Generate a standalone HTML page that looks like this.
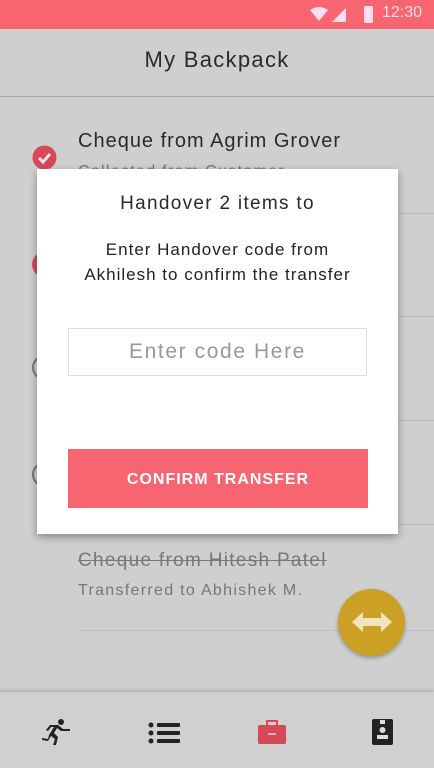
<!DOCTYPE html>
<html><head><style>
*{margin:0;padding:0;box-sizing:border-box}
body{width:434px;height:768px;overflow:hidden;background:#cfcfcf;font-family:"Liberation Sans",sans-serif;position:relative}
.abs{position:absolute}
.sb{left:0;top:0;width:434px;height:29px;background:#f76571}
.hdr{left:0;top:29px;width:434px;height:68px;border-bottom:1px solid #a8a8a8;text-align:center;line-height:62px;font-size:22px;letter-spacing:1.3px;color:#2a2a2a}
.div{left:78px;right:0;height:1px;background:#bdbdbd}
.t{left:78px;font-size:20px;letter-spacing:1px;color:#2a2a2a}
.s{left:78px;font-size:16px;letter-spacing:1.3px;color:#777}
.dlg{left:37px;top:169px;width:361px;height:365px;background:#fff;box-shadow:0 3px 8px rgba(0,0,0,.35)}
.nav{left:0;top:692px;width:434px;height:76px;background:#d0d0d0;box-shadow:0 -2px 3px rgba(0,0,0,.15)}
</style></head><body>
<div class="abs sb"></div>
<svg class="abs" style="left:308px;top:6px" width="48" height="18" viewBox="0 0 48 18"><path d="M2 4 Q11 -2 20 4 L11 15Z" fill="#fde"/><path d="M24 16 L38 2 L38 16Z" fill="#fde"/></svg>
<div class="abs" style="left:364px;top:6px;width:9px;height:17px;background:#fde;border-radius:1px"></div>
<div class="abs" style="left:382px;top:4px;color:#fde;font-size:16px">12:30</div>
<div class="abs hdr">My Backpack</div>
<div class="abs t" style="top:130px">Cheque from Agrim Grover</div>
<div class="abs s" style="top:163px">Collected from Customer</div>
<svg class="abs" style="left:32px;top:145px" width="25" height="25"><circle cx="12.5" cy="12.5" r="12" fill="#d64a58"/><path d="M7 13 L11 17 L18 9" stroke="#fde" stroke-width="3" fill="none"/></svg>
<div class="abs" style="left:32px;top:252px;width:25px;height:25px;border-radius:50%;background:#d64a58"></div>
<div class="abs" style="left:32px;top:355px;width:25px;height:25px;border-radius:50%;border:2px solid #777"></div>
<div class="abs" style="left:32px;top:462px;width:25px;height:25px;border-radius:50%;border:2px solid #777"></div>
<div class="abs div" style="top:213px"></div>
<div class="abs div" style="top:316px"></div>
<div class="abs div" style="top:420px"></div>
<div class="abs div" style="top:524px"></div>
<div class="abs t" style="top:550px;font-size:19px;letter-spacing:1.3px;color:#777;text-decoration:line-through">Cheque from Hitesh Patel</div>
<div class="abs s" style="top:582px">Transferred to Abhishek M.</div>
<div class="abs div" style="top:630px"></div>
<div class="abs" style="left:338px;top:589px;width:67px;height:67px;border-radius:50%;background:#cc9f25;box-shadow:0 2px 4px rgba(0,0,0,.3)"></div>
<svg class="abs" style="left:351px;top:609px" width="42" height="26"><path d="M1 13 L12 3 L12 9 L30 9 L30 3 L41 13 L30 23 L30 17 L12 17 L12 23Z" fill="#efe3c0"/></svg>
<div class="abs dlg">
<div class="abs" style="left:0;width:361px;top:24px;text-align:center;font-size:19px;letter-spacing:1.3px;color:#2a2a2a">Handover 2 items to</div>
<div class="abs" style="left:0;width:361px;top:68px;text-align:center;font-size:17px;letter-spacing:1px;line-height:25px;color:#222">Enter Handover code from<br>Akhilesh to confirm the transfer</div>
<div class="abs" style="left:31px;top:159px;width:299px;height:48px;border:1px solid #ddd;text-align:center;line-height:46px;font-size:21px;letter-spacing:1.6px;color:#999">Enter code Here</div>
<div class="abs" style="left:31px;top:280px;width:300px;height:59px;background:#f76571;color:#fff;text-align:center;line-height:61px;font-size:16px;letter-spacing:1px;font-weight:bold">CONFIRM TRANSFER</div>
</div>
<div class="abs nav"></div>
<svg class="abs" style="left:40px;top:718px" width="32" height="28" viewBox="0 0 32 28"><circle cx="21" cy="4" r="3" fill="#222"/><path d="M2 22 L8 23 L11 18 L15 21 L13 27 L16 27 L18 19 L14 15 L17 10 L21 13 L30 13 L30 11 L23 11 L18 7 L10 7 L6 12 L8 13 L11 9 L14 9 L9 17 L8 21 L2 20Z" fill="#222"/></svg>
<svg class="abs" style="left:148px;top:722px" width="33" height="22"><circle cx="3" cy="3" r="2.5" fill="#222"/><circle cx="3" cy="11" r="2.5" fill="#222"/><circle cx="3" cy="19" r="2.5" fill="#222"/><rect x="9" y="1" width="23" height="4" rx="1" fill="#222"/><rect x="9" y="9" width="23" height="4" rx="1" fill="#222"/><rect x="9" y="17" width="23" height="4" rx="1" fill="#222"/></svg>
<svg class="abs" style="left:257px;top:720px" width="30" height="25"><rect x="10" y="1" width="10" height="5" fill="none" stroke="#d64a58" stroke-width="2"/><rect x="1" y="5" width="28" height="19" rx="2" fill="#d64a58"/><rect x="11" y="13" width="8" height="2" fill="#eab"/></svg>
<svg class="abs" style="left:372px;top:719px" width="21" height="26"><rect x="0" y="0" width="21" height="26" rx="2" fill="#222"/><rect x="8" y="1" width="5" height="4" fill="#ddd"/><circle cx="10.5" cy="11" r="3" fill="#ddd"/><rect x="5" y="16" width="11" height="4" fill="#ddd"/></svg>
</body></html>
